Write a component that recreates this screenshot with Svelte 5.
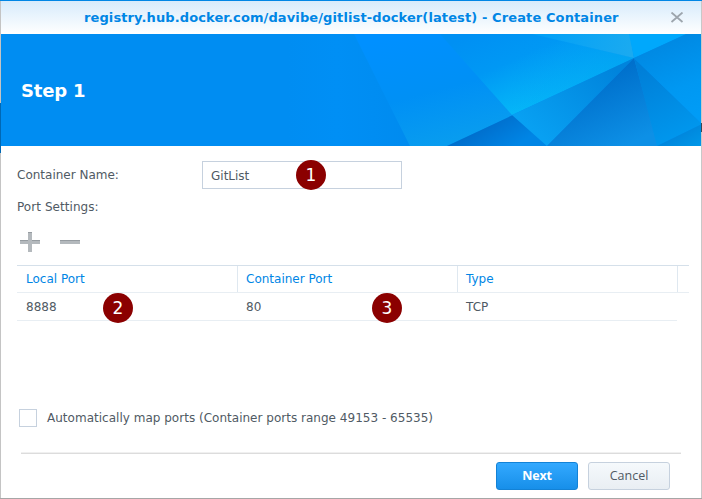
<script>
  const columns = ['Local Port', 'Container Port', 'Type'];
  const ports = [{ local: '8888', container: '80', type: 'TCP' }];
  let name = $state('GitList');
  let auto = $state(false);
</script>

<main class="window">
  <header>
    <h1>registry.hub.docker.com/davibe/gitlist-docker(latest) - Create Container</h1>
    <button class="close" aria-label="Close">
      <svg width="14" height="12" viewBox="0 0 14 12"><path d="M1.5 0.5 12.5 10M12.5 0.5 1.5 10" stroke="#9da5ad" stroke-width="1.8" /></svg>
    </button>
  </header>

  <section class="banner">
    <svg width="700" height="112" viewBox="1 34 700 112" preserveAspectRatio="none" aria-hidden="true">
      <defs>
        <linearGradient id="fade" x1="0" y1="0" x2="1" y2="0"><stop stop-color="#008df2" /><stop offset=".4" stop-color="#008ff5" /><stop offset="1" stop-color="#008bef" /></linearGradient>
        <linearGradient id="b" gradientUnits="userSpaceOnUse" x1="480" y1="30" x2="517" y2="113"><stop stop-color="#0090f3" /><stop offset=".45" stop-color="#0098f4" /><stop offset="1" stop-color="#05b8f8" /></linearGradient>
        <linearGradient id="bl" gradientUnits="userSpaceOnUse" x1="520" y1="34" x2="634" y2="58"><stop stop-color="#0094f5" stop-opacity="0" /><stop offset="1" stop-color="#0098ee" /></linearGradient>
        <linearGradient id="c" gradientUnits="userSpaceOnUse" x1="540" y1="34" x2="630" y2="50"><stop stop-color="#02a0f7" /><stop offset="1" stop-color="#1aaaf0" /></linearGradient>
        <linearGradient id="d" gradientUnits="userSpaceOnUse" x1="610" y1="65" x2="545" y2="140"><stop stop-color="#0084dc" /><stop offset="1" stop-color="#08a0f2" /></linearGradient>
        <linearGradient id="e" gradientUnits="userSpaceOnUse" x1="595" y1="80" x2="625" y2="146"><stop stop-color="#0070cc" /><stop offset="1" stop-color="#0d90e6" /></linearGradient>
        <linearGradient id="f" gradientUnits="userSpaceOnUse" x1="640" y1="70" x2="678" y2="146"><stop stop-color="#007fd8" /><stop offset="1" stop-color="#0099ef" /></linearGradient>
        <linearGradient id="g" gradientUnits="userSpaceOnUse" x1="665" y1="45" x2="695" y2="115"><stop stop-color="#008ae4" /><stop offset=".6" stop-color="#0098f2" /><stop offset="1" stop-color="#009cf6" /></linearGradient>
        <linearGradient id="h" gradientUnits="userSpaceOnUse" x1="480" y1="122" x2="500" y2="155"><stop stop-color="#006bc9" /><stop offset="1" stop-color="#0085e5" /></linearGradient>
        <linearGradient id="i" gradientUnits="userSpaceOnUse" x1="400" y1="34" x2="430" y2="146"><stop stop-color="#0090ff" /><stop offset=".55" stop-color="#0090f5" /><stop offset="1" stop-color="#089cef" /></linearGradient>
        <linearGradient id="j" gradientUnits="userSpaceOnUse" x1="670" y1="130" x2="685" y2="155"><stop stop-color="#0080d8" /><stop offset="1" stop-color="#0097e8" /></linearGradient>
      </defs>
      <path fill="#008df2" d="M1 34h700v112H1z" />
      <path fill="url(#fade)" d="M288 34h66l56 112H288z" />
      <path fill="url(#i)" d="M354 34h88l71 81-66 31h-37z" />
      <path fill="url(#b)" d="M440 34h94l100 24-122 57z" />
      <path fill="url(#bl)" d="M440 34h94l100 24-122 57z" opacity=".6" />
      <path fill="url(#c)" d="M532 34h98l4 24z" />
      <path fill="#00a8fc" d="M629 34h58l-53 24z" />
      <path fill="url(#h)" d="M447 146 513 115 547 146z" />
      <path fill="url(#d)" d="M512 115 634 58 547 146z" />
      <path fill="url(#e)" d="M634 58 547 146h111z" />
      <path fill="url(#f)" d="M634 58 702 124 657 146z" />
      <path fill="url(#g)" d="M686 34h16v90L634 58z" />
      <path fill="url(#j)" d="M657 146 702 124v22z" />
    </svg>
    <h2>Step 1</h2>
  </section>

  <form onsubmit={(e) => e.preventDefault()}>
    <div class="field">
      <label for="name">Container Name:</label>
      <div class="inputwrap">
        <input id="name" bind:value={name} />
        <span class="badge one">1</span>
      </div>
    </div>
    <div class="label">Port Settings:</div>
    <div class="tools">
      <button aria-label="Add"><svg width="20" height="20"><path fill="#b4b9bd" d="M8 0h4v8h8v4h-8v8H8v-8H0V8h8z" /><path fill="#969ca1" d="M0 8h8v1H0zM12 8h8v1h-8zM8 0h4v1H8z" /></svg></button>
      <button aria-label="Remove"><svg width="20" height="20"><path fill="#b4b9bd" d="M0 8h20v4H0z" /><path fill="#969ca1" d="M0 8h20v1H0z" /></svg></button>
    </div>

    <div class="grid">
      <div class="row head">
        {#each columns as c}<div class="cell">{c}</div>{/each}
      </div>
      {#each ports as p}
        <div class="row body">
          <div class="cell">{p.local}<span class="badge two">2</span></div>
          <div class="cell">{p.container}<span class="badge three">3</span></div>
          <div class="cell">{p.type}</div>
        </div>
      {/each}
    </div>

    <label class="check">
      <input type="checkbox" bind:checked={auto} />
      <span>Automatically map ports (Container ports range 49153 - 65535)</span>
    </label>

    <footer>
      <button class="btn next">Next</button>
      <button class="btn cancel" type="button">Cancel</button>
    </footer>
  </form>
</main>

<style>
  :global(body) { margin: 0; background: #fff; }
  * { box-sizing: border-box; }
  .window {
    width: 702px; height: 499px; overflow: hidden; padding: 0 1px;
    border: solid; border-width: 1px 0; border-top-color: #0086e5; border-bottom-color: #a6a6a6;
    /* 1px slivers of the desktop along both sides of the window */
    background:
      linear-gradient(#c4c4c4 102px, #0068b4 102px 152px, #c4c4c4 152px) left / 1px 100% no-repeat,
      linear-gradient(#c8c8c8 122px, #3c4650 122px 131px, #c8c8c8 131px) right / 1px 100% no-repeat,
      #fff;
    display: flex; flex-direction: column;
    font: 12px/16px "DejaVu Sans", Verdana, sans-serif; color: #505a64;
  }
  button { padding: 0; border: 0; background: none; font: inherit; }
  svg { display: block; }
  header {
    height: 33px; flex: none; display: flex; align-items: center;
    background: linear-gradient(#d7ebfb, #fff);
  }
  h1 {
    margin: 0 0 0 83px; width: 586px; font-size: 13px; line-height: 33px;
    font-weight: bold; color: #0086e5; white-space: nowrap; letter-spacing: 0.11px;
  }
  .banner { height: 112px; flex: none; display: grid; align-items: center; }
  .banner > * { grid-area: 1 / 1; }
  h2 { margin: 1px 0 0 20px; color: #fff; font-size: 18px; line-height: 24px; letter-spacing: -0.2px; z-index: 1; }
  form { display: flex; flex-direction: column; padding: 15px 12px 0 16px; }
  .field { display: flex; align-items: center; height: 28px; }
  .field label { width: 185px; }
  .inputwrap { position: relative; width: 200px; height: 28px; }
  .inputwrap input {
    width: 200px; height: 28px; border: 1px solid #c6d1de; padding: 1px 8px 0; margin: 0;
    font: inherit; color: #505a64; outline: none; border-radius: 0; background: #fff; display: block;
  }
  .badge {
    position: absolute; width: 30px; height: 30px; border-radius: 50%; background: #8b0000;
    color: #fff; font: 17px/30px "DejaVu Sans", sans-serif; text-align: center; z-index: 2;
  }
  .one { left: 94px; top: -1px; }
  .two { left: 86px; top: 0; }
  .three { left: 135px; top: 0; }
  .label { margin-top: 10px; letter-spacing: 0.06px; }
  .tools { display: flex; gap: 20px; margin: 17px 0 0 3px; height: 33px; }
  .tools button { height: 20px; }
  .row { display: flex; }
  .cell { position: relative; width: 220px; padding-left: 9px; }
  .head { height: 28px; border-top: 1px solid #d5e0ea; border-bottom: 1px solid #e8eef3; color: #0086e5; }
  .head .cell { width: 221px; margin-right: -1px; border-right: 1px solid #dfe8f0; line-height: 26px; }
  .body { width: 660px; height: 28px; border-bottom: 1px solid #e8eef3; line-height: 28px; }
  .check { display: flex; align-items: center; gap: 10px; margin: 88px 0 0 2px; height: 18px; white-space: nowrap; letter-spacing: 0.015px; }
  .check input { appearance: none; width: 18px; height: 18px; margin: 0; border: 1px solid #c6d1de; background: #fff; }
  footer {
    margin: 25px 8px 0 4px; padding: 8px 11px 0 0; height: 60px;
    border-top: 2px solid; border-image: linear-gradient(#f0f0f0 1px, #dcdcdc 1px) 2 0 0 0;
    border-right: 0; border-left: 0; border-bottom: 0;
    display: flex; justify-content: flex-end; gap: 10px; align-items: flex-start;
  }
  .btn { width: 82px; height: 28px; border-radius: 3px; border: 1px solid; font: 12.5px/26px "Open Sans", "Noto Sans", sans-serif; text-align: center; }
  .next { background: linear-gradient(#33a9ff, #178fe9); border-color: #1382d6; color: #fff; font-weight: 700; letter-spacing: -0.2px; }
  .cancel { background: linear-gradient(#f5f9fc, #e9eef3); border-color: #c6d1de; color: #505a64; }
</style>
